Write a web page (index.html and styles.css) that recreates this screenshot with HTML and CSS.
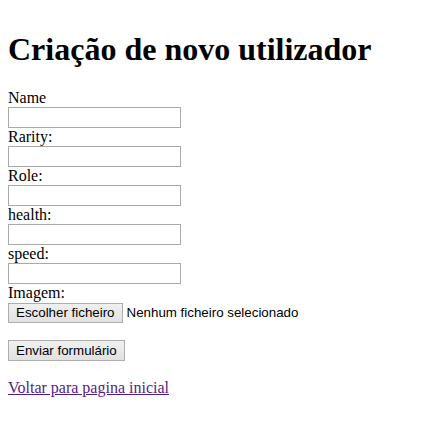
FILE: index.html
```html
<!DOCTYPE HTML>
<html>
<head>
<meta charset="UTF-8">
<title>Criação de novo utilizador</title>
<link rel="stylesheet" href="styles.css">
</head>

<body>
<h1>Criação de novo utilizador</h1>
<form id="newUser">
	<label for="name">Name</label><br>
	<input type="text" id="name" class="field"><br>
	<label for="rarity">Rarity:</label><br>
	<input type="text" id="rarity" class="field"><br>
	<label for="role">Role:</label><br>
	<input type="text" id="role" class="field"><br>
	<label for="health">health:</label><br>
	<input type="text" id="health" class="field"><br>
	<label for="speed">speed:</label><br>
	<input type="text" id="speed" class="field"><br>
	<label for="image">Imagem:</label><br>
	<span class="file">
		<label for="image" class="btn">Escolher ficheiro</label>
		<span class="filename">Nenhum ficheiro selecionado</span>
		<input type="file" id="image" class="hidden">
	</span><br>
	<br>
	<button type="submit" class="btn">Enviar formulário</button>
</form>
<br>
<a href="#" class="back">Voltar para pagina inicial</a>
</body>
</html>
```

FILE: styles.css
```css
body {margin:8px; font-family:"Liberation Serif", serif; font-size:16px; color:#000; background:#fff;}
h1 {font-size:2em; font-weight:bold; margin:23px 0 21px;}
.field {box-sizing:border-box; width:173px; height:21px; border:1px solid #a9a9a9; padding:1px 2px; margin:0; font-family:"Liberation Sans", sans-serif; font-size:13px; vertical-align:bottom;}
.btn {display:inline-block; box-sizing:border-box; height:20px; padding:1px 7px; margin:0; border:1px solid #adadad; background:linear-gradient(#f0f0f0, #e1e1e1); font-family:"Liberation Sans", sans-serif; font-size:13.33px; line-height:16px; color:#000; vertical-align:middle;}
.file .btn {position:relative; top:1px;}
#newUser button.btn {height:21px;}
.filename {font-family:"Liberation Sans", sans-serif; font-size:13.33px; vertical-align:middle;}
.hidden {display:none;}
.back {color:#551a8b;}
```
